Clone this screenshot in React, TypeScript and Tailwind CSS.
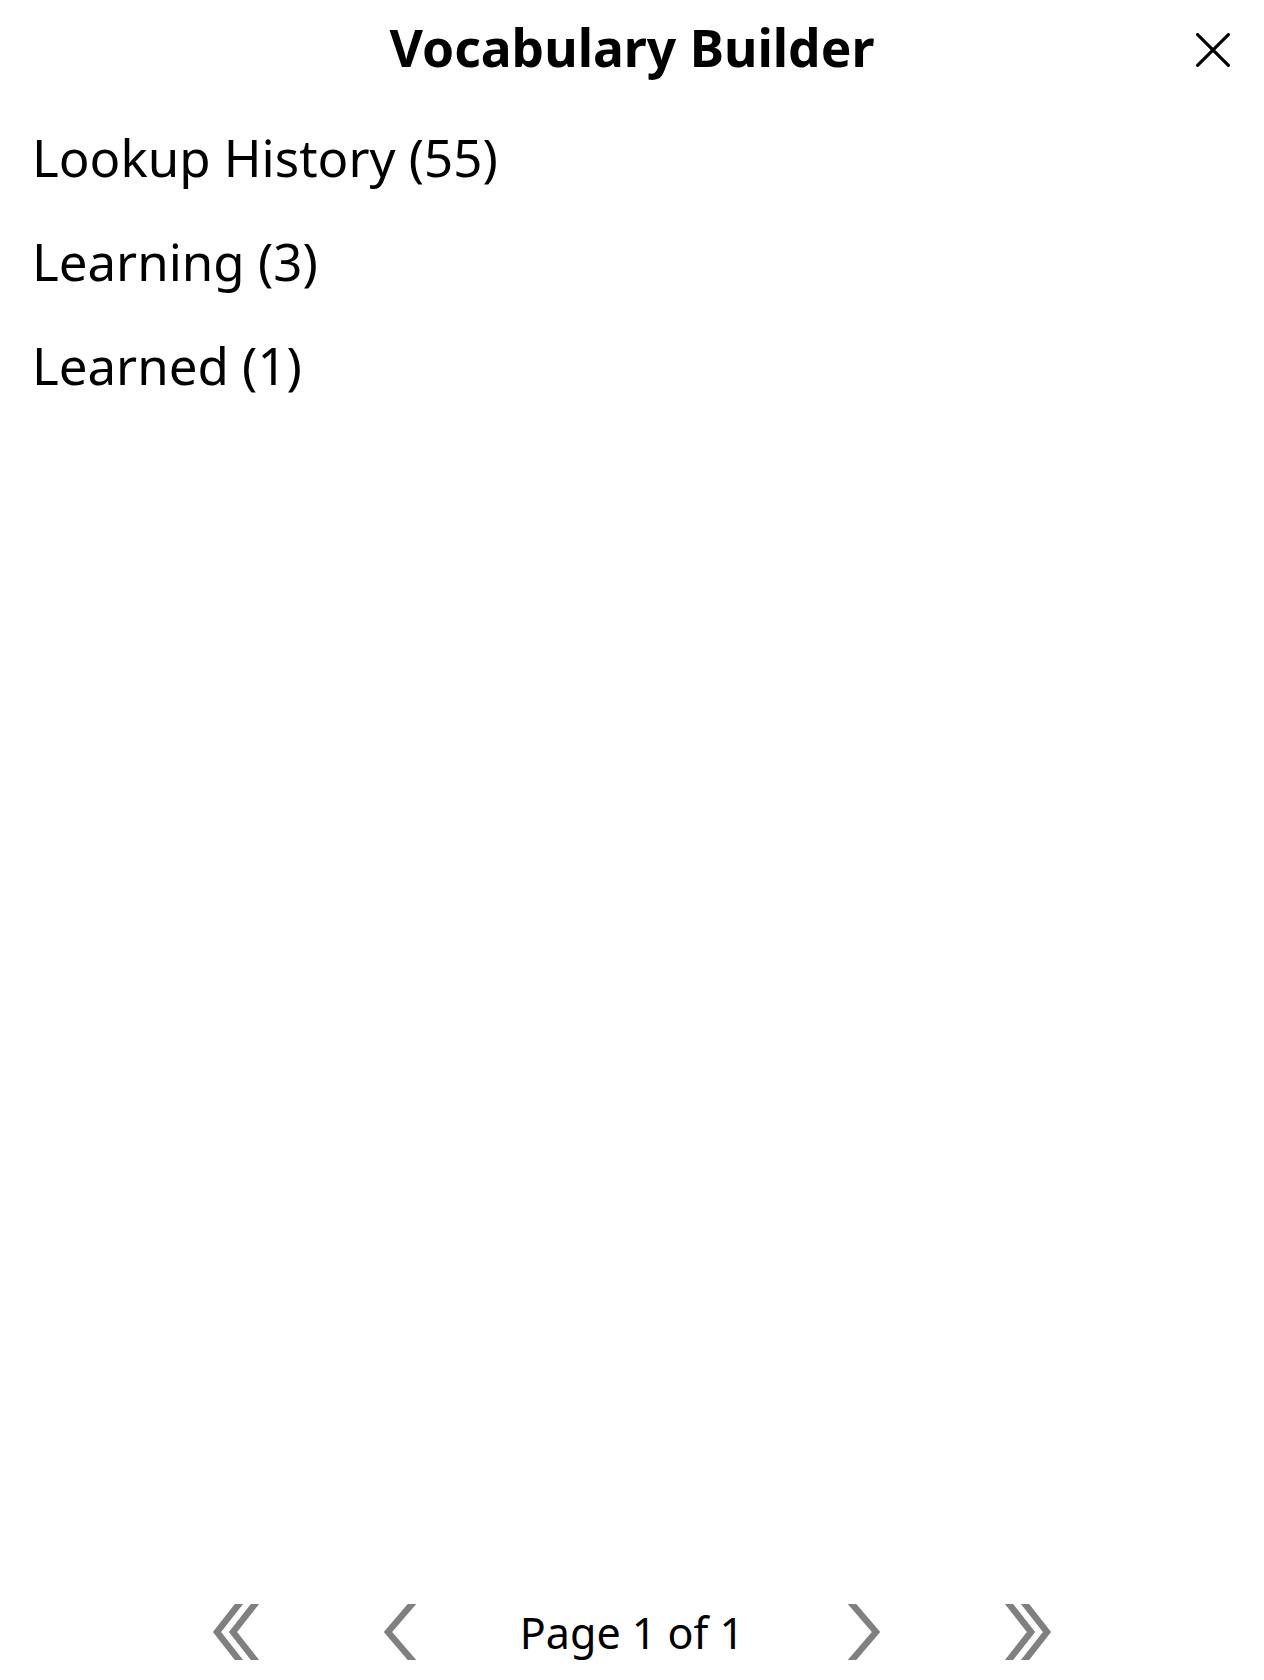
import React from "react";

const lists = [
  { name: "Lookup History", count: 55 },
  { name: "Learning", count: 3 },
  { name: "Learned", count: 1 },
];

// chevron drawn as a clipped polyline, flat cut at top and bottom
const Chevron: React.FC<{ double?: boolean; right?: boolean }> = ({ double, right }) => {
  const flip = right ? "-scale-x-100" : "";
  if (double) {
    return (
      <svg width="56" height="56" viewBox="0 0 56 56" className={flip}>
        <g fill="none" stroke="#808080" strokeWidth="6.5" strokeLinejoin="miter" strokeMiterlimit="10">
          <polyline points="34.1,-4 9,28 34.1,60" />
          <polyline points="50.1,-4 25,28 50.1,60" />
        </g>
      </svg>
    );
  }
  return (
    <svg width="40" height="56" viewBox="0 0 40 56" className={flip}>
      <polyline
        points="35.4,-4 8,28 35.4,60"
        fill="none"
        stroke="#808080"
        strokeWidth="6.5"
        strokeLinejoin="miter"
        strokeMiterlimit="10"
      />
    </svg>
  );
};

const App: React.FC = () => {
  return (
    <div
      className="flex flex-col h-[1680px] w-full bg-white text-black"
      style={{ fontFamily: '"Noto Sans", "Open Sans", sans-serif' }}
    >
      {/* Title bar */}
      <div className="grid grid-cols-[1fr_auto_1fr] h-[105px]">
        <div />
        <div className="pt-[22px] text-[51.5px] leading-none font-bold">Vocabulary Builder</div>
        <div className="flex justify-end pr-[34px] pt-[33px]">
          <button className="w-[34px] h-[34px]">
            <svg width="34" height="34" viewBox="0 0 34 34">
              <g stroke="#000" strokeWidth="3.2" strokeLinecap="round">
                <line x1="1.6" y1="1.6" x2="32.4" y2="32.4" />
                <line x1="32.4" y1="1.6" x2="1.6" y2="32.4" />
              </g>
            </svg>
          </button>
        </div>
      </div>

      {/* Word lists */}
      <div className="flex flex-col flex-1">
        {lists.map((item) => (
          <div key={item.name} className="flex items-center h-[104px] pl-[32px] text-[51px] leading-none cursor-pointer">
            {item.name} ({item.count})
          </div>
        ))}
      </div>

      {/* Pagination */}
      <div className="flex justify-center items-center h-[96px]">
        <div className="w-[164px] flex justify-center">
          <Chevron double />
        </div>
        <div className="w-[164px] flex justify-center">
          <Chevron />
        </div>
        <div className="w-[300px] text-center text-[43px] leading-none">Page 1 of 1</div>
        <div className="w-[164px] flex justify-center">
          <Chevron right />
        </div>
        <div className="w-[164px] flex justify-center">
          <Chevron double right />
        </div>
      </div>
    </div>
  );
};

export default App;
